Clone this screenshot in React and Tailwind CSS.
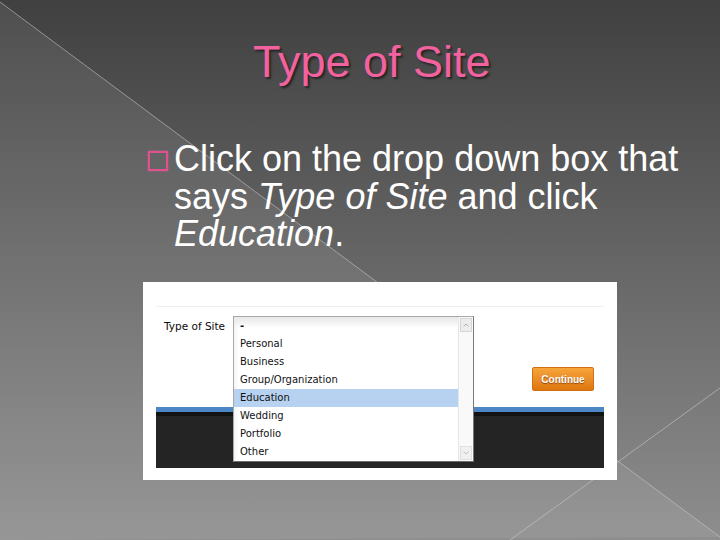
import React from "react";

const options = ["-", "Personal", "Business", "Group/Organization", "Education", "Wedding", "Portfolio", "Other"];

const SlideBackground = () => (
  <svg className="absolute inset-0" width="720" height="540" viewBox="0 0 720 540">
    <defs>
      <linearGradient id="bg" x1="0" y1="0" x2="0" y2="1">
        <stop offset="0" stopColor="#404040" />
        <stop offset="1" stopColor="#8e8e8e" />
      </linearGradient>
    </defs>
    <rect width="720" height="540" fill="url(#bg)" />
    <polygon points="0,2 720,537 0,540" fill="#ffffff" fillOpacity="0.08" />
    <line x1="0" y1="2" x2="720" y2="537" stroke="#d0d0d0" strokeOpacity="0.55" strokeWidth="1" />
    <line x1="510" y1="540" x2="720" y2="388" stroke="#d0d0d0" strokeOpacity="0.55" strokeWidth="1" />
  </svg>
);

const SiteDropdown = () => (
  <div className="absolute left-[90px] top-[34px] z-10 w-[241px] h-[146px] flex bg-white border border-[#a8a8a8] border-r-[#7a7a7a] border-b-[#6a6a6a] shadow-[inset_0_6px_6px_rgba(0,0,0,0.09)] font-['DejaVu_Sans',sans-serif] text-[10px] text-[#111]">
    <ul className="flex-1 flex flex-col">
      {options.map((o) => (
        <li
          key={o}
          className={
            o === "Education"
              ? "h-[18px] leading-[18px] pl-[6px] bg-[#b6d2f0]"
              : "h-[18px] leading-[18px] pl-[6px]"
          }
        >
          {o === "-" ? <b>-</b> : o}
        </li>
      ))}
    </ul>
    <div className="w-[15px] flex flex-col justify-between items-center py-px bg-[#f9f9f9] border-l border-[#e6e6e6]">
      <div className="w-[12px] h-[14px] flex items-center justify-center bg-[#ececec] border border-[#d6d6d6]">
        <svg width="6" height="4" viewBox="0 0 6 4">
          <path d="M0.5 3.5 L3 1 L5.5 3.5" fill="none" stroke="#b0b0b0" strokeWidth="1" />
        </svg>
      </div>
      <div className="w-[12px] h-[14px] flex items-center justify-center bg-[#f0f0f0] border border-[#e0e0e0]">
        <svg width="6" height="4" viewBox="0 0 6 4">
          <path d="M0.5 0.5 L3 3 L5.5 0.5" fill="none" stroke="#c0c0c0" strokeWidth="1" />
        </svg>
      </div>
    </div>
  </div>
);

const Screenshot = () => (
  <div className="relative ml-[143px] mt-[29.5px] w-[474px] h-[198px] bg-white flex flex-col px-[13px] pb-[12px]">
    <div className="mt-[24px] h-px bg-[#f0f0f0]" />
    <div className="flex-1 flex justify-between items-start">
      <span className="ml-[8px] mt-[13px] leading-[12px] font-['DejaVu_Sans',sans-serif] text-[10.5px] text-[#0a0a0a]">
        Type of Site
      </span>
      <button className="mt-[60px] mr-[10px] w-[62px] h-[24px] rounded-[2px] bg-gradient-to-b from-[#f7a53a] to-[#de760c] border border-[#d0700e] font-['Liberation_Sans',sans-serif] text-[10px] font-bold text-white [text-shadow:0_1px_1px_rgba(120,50,0,0.8)]">
        Continue
      </button>
    </div>
    <div className="h-[61px] flex flex-col">
      <div className="h-[5px] bg-[#4c86c4]" />
      <div className="h-[4px] bg-[#121212]" />
      <div className="flex-1 bg-[#242424]" />
    </div>
    <SiteDropdown />
  </div>
);

export default function App() {
  return (
    <div className="relative w-[720px] h-[540px] overflow-hidden font-['Liberation_Sans',Arial,sans-serif]">
      <SlideBackground />
      <div className="relative flex flex-col">
        <h1 className="pt-[39px] pl-[253px] text-[45px] leading-none text-[#f2629f] [text-shadow:2px_2px_2px_#262626]">
          Type of Site
        </h1>
        <div className="mt-[56px] ml-[148px] flex items-start">
          <div className="mt-[11px] w-[20px] h-[20px] border-2 border-[#e0528f] shadow-[0_0_2px_rgba(240,90,150,0.6)]" />
          <p className="ml-[6px] text-[36px] leading-[37.5px] text-white">
            Click on the drop down box that
            <br />
            says <i>Type of Site</i> and click
            <br />
            <i>Education</i>.
          </p>
        </div>
        <Screenshot />
      </div>
    </div>
  );
}
